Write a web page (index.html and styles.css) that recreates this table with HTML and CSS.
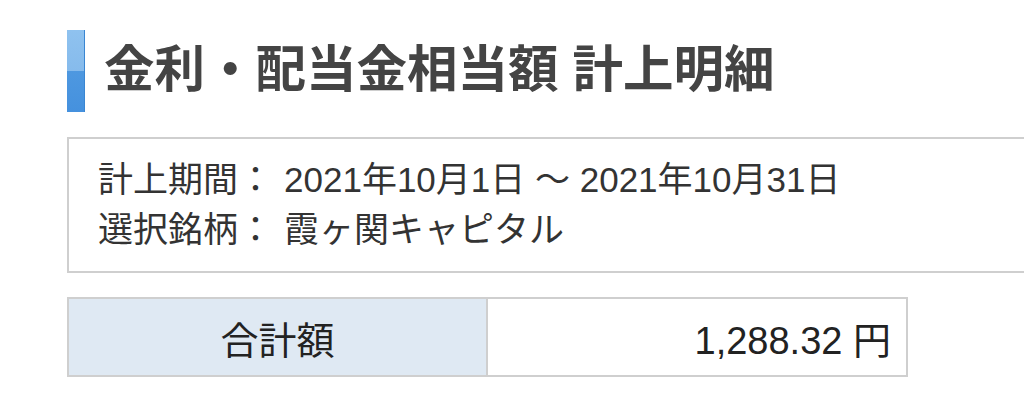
FILE: index.html
```html
<!DOCTYPE html>
<html lang="ja">
<head>
<meta charset="utf-8">
<link rel="stylesheet" href="styles.css">
</head>
<body>
<main class="page">
  <h1 class="title"><span class="title-bar"></span><span class="title-text">金利・配当金相当額 計上明細</span></h1>
  <section class="info">
    <div class="info-row"><span class="label">計上期間：</span><span class="value">2021年10月1日 ～ 2021年10月31日</span></div>
    <div class="info-row"><span class="label">選択銘柄：</span><span class="value">霞ヶ関キャピタル</span></div>
  </section>
  <div class="total">
    <div class="total-label">合計額</div>
    <div class="total-value">1,288.32 円</div>
  </div>
</main>
</body>
</html>
```

FILE: styles.css
```css
html, body {
  margin: 0;
  padding: 0;
  background: #fff;
  overflow: hidden;
}
body {
  font-family: "Liberation Sans", "Noto Sans CJK JP", sans-serif;
  color: #333;
}
.page {
  padding: 30px 0 0 67px;
}
.title {
  display: flex;
  align-items: center;
  gap: 19px;
  margin: 0;
  height: 82px;
}
.title-bar {
  flex: none;
  width: 18px;
  height: 82px;
  background: linear-gradient(to bottom, #8fc2ef 0%, #86bbec 50%, #4e98e0 50%, #4591de 100%);
  box-shadow: inset -1px 0 0 #3a86d2;
}
.title-text {
  font-size: 50.5px;
  line-height: 60px;
  font-weight: bold;
  color: #444;
  white-space: nowrap;
  margin-top: -3px;
}
.info {
  margin-top: 25px;
  border: 2px solid #cfcfcf;
  border-right: 0;
  padding: 16px 0 16px 29px;
  font-size: 35px;
  line-height: 50px;
  color: #333;
}
.info-row {
  display: flex;
  white-space: nowrap;
}
.label {
  margin-right: 11px;
}
.total {
  display: grid;
  grid-template-columns: 419px 1fr;
  margin-top: 24px;
  width: 841px;
  border: 2px solid #cfcfcf;
  box-sizing: border-box;
  height: 80px;
  font-size: 38px;
  color: #222;
}
.total-label {
  background: #dfe9f3;
  border-right: 2px solid #cfcfcf;
  display: flex;
  align-items: center;
  justify-content: center;
}
.total-value {
  display: flex;
  align-items: center;
  justify-content: flex-end;
  padding-right: 15px;
}
```
